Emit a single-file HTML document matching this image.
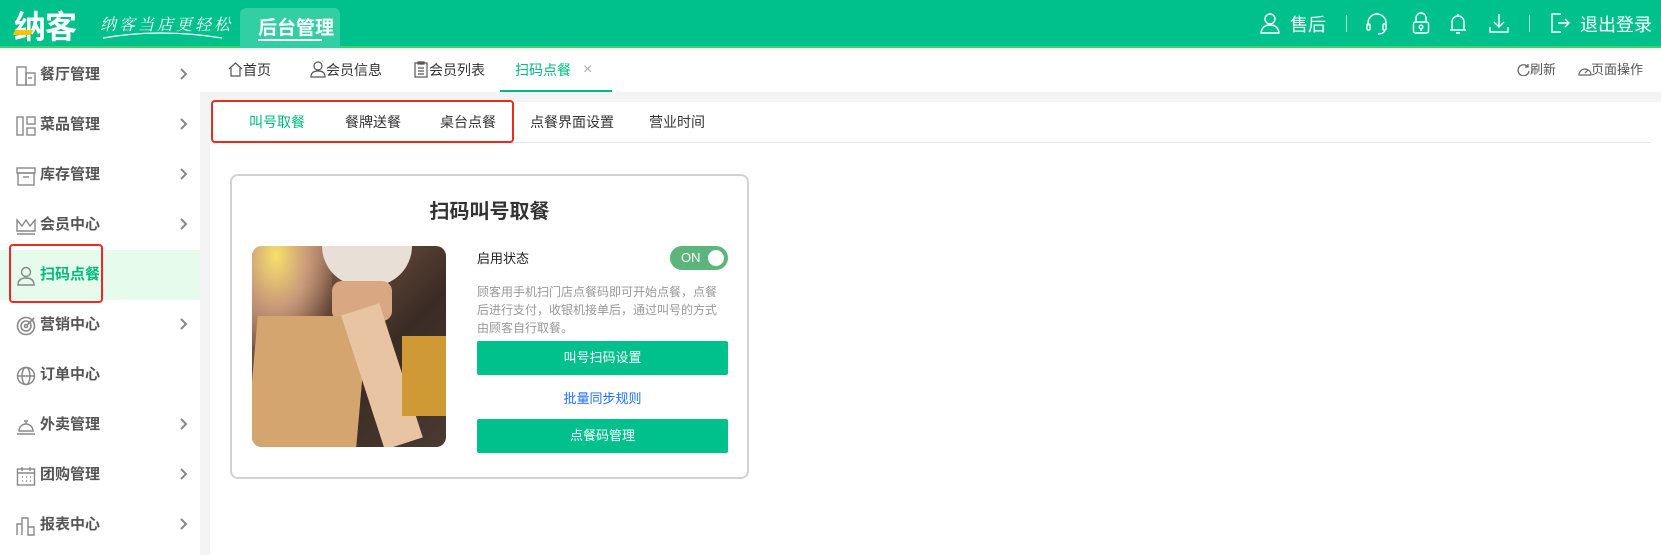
<!DOCTYPE html>
<html><head><meta charset="utf-8"><style>
*{margin:0;padding:0;box-sizing:border-box}
body{width:1661px;height:555px;overflow:hidden;background:#f4f4f4;font-family:"Liberation Sans","Noto Sans CJK SC",sans-serif;position:relative}
.a{position:absolute}
.hdr{left:0;top:0;width:1661px;height:48px;background:#00c08b;border-bottom:2px solid #3fd06e}
.w{color:#fff}
.side{left:0;top:50px;width:200px;height:505px;background:#fff}
.row{position:absolute;left:0;width:200px;height:50px;font-size:15px;font-weight:bold;color:#555;line-height:50px}
.row .t{position:absolute;left:40px}
.row .c{position:absolute;left:180px;top:18px}
.row svg{position:absolute;left:16px;top:16px}
.tabbar{left:200px;top:50px;width:1461px;height:42px;background:#fff}
.tb{position:absolute;top:0;line-height:40px;font-size:14px;color:#333}
.panel{left:210px;top:102px;width:1451px;height:453px;background:#fff}
.st{position:absolute;top:108px;font-size:14px;color:#333;line-height:28px}
</style></head><body>
<div class="a hdr"></div>
<div class="a w" style="left:14px;top:2px;font-size:32px;font-weight:bold;letter-spacing:-1px">纳客</div>
<div class="a" style="left:14px;top:30px;width:18px;height:5px;background:#f5c400;transform:skewX(-30deg)"></div>
<div class="a w" style="left:100px;top:12px;font-size:16px;font-style:italic;font-family:'Noto Serif CJK SC',serif;letter-spacing:3px">纳客当店更轻松</div>
<svg class="a" style="left:100px;top:30px" width="125" height="10"><path d="M3 8 Q60 -2 122 8" stroke="#fff" fill="none" stroke-width="1.2"/></svg>
<div class="a" style="left:240px;top:8px;width:100px;height:40px;background:#31cfa2;border-radius:6px 6px 0 0"></div>
<div class="a w" style="left:258px;top:13px;font-size:19px;font-weight:bold">后台管理</div>
<div class="a" style="left:258px;top:39px;width:64px;height:2px;background:#fff"></div>
<svg class="a" style="left:1259px;top:12px" width="22" height="22" fill="none" stroke="#fff" stroke-width="1.4"><circle cx="11" cy="7" r="5"/><path d="M2 21 Q3 13 11 13 Q19 13 20 21Z"/></svg>
<div class="a w" style="left:1290px;top:11px;font-size:18px">售后</div>
<div class="a" style="left:1346px;top:15px;width:1px;height:17px;background:#9fe5cc"></div>
<svg class="a" style="left:1366px;top:13px" width="22" height="22" fill="none" stroke="#fff" stroke-width="1.4"><path d="M2 13 V10 A9 9 0 0 1 20 10 V13"/><rect x="1" y="11" width="3" height="6" rx="1"/><rect x="17" y="11" width="3" height="6" rx="1"/><path d="M19 17 Q18 21 12 21"/></svg>
<svg class="a" style="left:1412px;top:12px" width="18" height="22" fill="none" stroke="#fff" stroke-width="1.4"><path d="M4 10 V6 A5 5 0 0 1 14 6 V10"/><rect x="1.5" y="10" width="15" height="11" rx="2"/><circle cx="9" cy="15" r="1.8"/><path d="M9 17 V19"/></svg>
<svg class="a" style="left:1449px;top:12px" width="18" height="22" fill="none" stroke="#fff" stroke-width="1.4"><path d="M3 18 V10 A6 6 0 0 1 15 10 V18 Z M1 18 H17 M9 2 V4 M7 21 H11"/></svg>
<svg class="a" style="left:1488px;top:12px" width="22" height="22" fill="none" stroke="#fff" stroke-width="1.4"><path d="M11 2 V15 M6 10 L11 15 L16 10 M2 15 V20 H20 V15"/></svg>
<div class="a" style="left:1529px;top:15px;width:1px;height:17px;background:#9fe5cc"></div>
<svg class="a" style="left:1549px;top:12px" width="22" height="22" fill="none" stroke="#fff" stroke-width="1.4"><path d="M12 2 H3 V20 H12 M9 11 H20 M16 7 L20 11 L16 15"/></svg>
<div class="a w" style="left:1580px;top:11px;font-size:18px">退出登录</div>

<div class="a side">
 <div class="row" style="top:0"><svg width="20" height="20" fill="none" stroke="#888" stroke-width="1.4"><rect x="1" y="1" width="9" height="18"/><rect x="10" y="7" width="9" height="12"/><path d="M12 12h4"/></svg><span class="t">餐厅管理</span><svg class="c" width="8" height="12" fill="none" stroke="#888" stroke-width="2"><path d="M1 1 L6 6 L1 11"/></svg></div>
 <div class="row" style="top:50px"><svg width="20" height="20" fill="none" stroke="#888" stroke-width="1.4"><rect x="1" y="1" width="6" height="18"/><rect x="11" y="1" width="8" height="7"/><rect x="11" y="12" width="8" height="7"/></svg><span class="t">菜品管理</span><svg class="c" width="8" height="12" fill="none" stroke="#888" stroke-width="2"><path d="M1 1 L6 6 L1 11"/></svg></div>
 <div class="row" style="top:100px"><svg width="20" height="20" fill="none" stroke="#888" stroke-width="1.4"><rect x="1" y="2" width="18" height="5"/><rect x="2" y="7" width="16" height="12"/><path d="M7 11h6"/></svg><span class="t">库存管理</span><svg class="c" width="8" height="12" fill="none" stroke="#888" stroke-width="2"><path d="M1 1 L6 6 L1 11"/></svg></div>
 <div class="row" style="top:150px"><svg width="20" height="20" fill="none" stroke="#888" stroke-width="1.4"><path d="M1 4 L6 10 L10 4 L14 10 L19 4 V15 H1Z M1 18 H19"/></svg><span class="t">会员中心</span><svg class="c" width="8" height="12" fill="none" stroke="#888" stroke-width="2"><path d="M1 1 L6 6 L1 11"/></svg></div>
 <div class="row" style="top:200px;background:#e6fbec;color:#00b97f"><svg width="20" height="20" fill="none" stroke="#888" stroke-width="1.4"><circle cx="10" cy="6" r="4.5"/><path d="M2 19 Q2 12 10 12 Q18 12 18 19Z"/></svg><span class="t">扫码点餐</span></div>
 <div class="row" style="top:250px"><svg width="20" height="20" fill="none" stroke="#888" stroke-width="1.6"><circle cx="10" cy="10" r="8.5"/><circle cx="10" cy="10" r="5"/><circle cx="10" cy="10" r="1.5"/><path d="M11 9 L18 2"/></svg><span class="t">营销中心</span><svg class="c" width="8" height="12" fill="none" stroke="#888" stroke-width="2"><path d="M1 1 L6 6 L1 11"/></svg></div>
 <div class="row" style="top:300px"><svg width="20" height="20" fill="none" stroke="#888" stroke-width="1.5"><circle cx="10" cy="10" r="8.5"/><ellipse cx="10" cy="10" rx="4" ry="8.5"/><path d="M1.5 10h17"/></svg><span class="t">订单中心</span></div>
 <div class="row" style="top:350px"><svg width="20" height="20" fill="none" stroke="#888" stroke-width="1.4"><path d="M3 15 A7 7 0 0 1 17 15 Z M1 18 H19 M8 5 H12 M10 5 V8"/></svg><span class="t">外卖管理</span><svg class="c" width="8" height="12" fill="none" stroke="#888" stroke-width="2"><path d="M1 1 L6 6 L1 11"/></svg></div>
 <div class="row" style="top:400px"><svg width="20" height="20" fill="none" stroke="#888" stroke-width="1.4"><rect x="1.5" y="3" width="17" height="16"/><path d="M1.5 7 H18.5 M6 1v4 M14 1v4"/><path d="M6 11h1M10 11h1M14 11h1M6 15h1M10 15h1M14 15h1"/></svg><span class="t">团购管理</span><svg class="c" width="8" height="12" fill="none" stroke="#888" stroke-width="2"><path d="M1 1 L6 6 L1 11"/></svg></div>
 <div class="row" style="top:450px"><svg width="20" height="20" fill="none" stroke="#888" stroke-width="1.4"><path d="M1 19 V8 H6 V19 M6 19 V2 H12 V19 M12 19 V11 H18 V19 Z"/></svg><span class="t">报表中心</span><svg class="c" width="8" height="12" fill="none" stroke="#888" stroke-width="2"><path d="M1 1 L6 6 L1 11"/></svg></div>
</div>
<div class="a" style="left:9px;top:244px;width:94px;height:59px;border:2px solid #f0281e;border-radius:4px"></div>

<div class="a tabbar">
 <svg class="a" style="left:28px;top:12px" width="15" height="15" fill="none" stroke="#555" stroke-width="1.2"><path d="M1 7 L7.5 1 L14 7 M3 6 V14 H12 V6"/></svg>
 <span class="tb" style="left:43px">首页</span>
 <svg class="a" style="left:110px;top:11px" width="16" height="17" fill="none" stroke="#555" stroke-width="1.2"><circle cx="8" cy="5" r="4"/><path d="M1 16 Q1 10 8 10 Q15 10 15 16Z"/></svg>
 <span class="tb" style="left:126px">会员信息</span>
 <svg class="a" style="left:214px;top:11px" width="14" height="17" fill="none" stroke="#555" stroke-width="1.2"><rect x="1" y="2" width="12" height="14"/><path d="M4 1h6v2H4z M4 7h6M4 10h6M4 13h6"/></svg>
 <span class="tb" style="left:229px">会员列表</span>
 <span class="tb" style="left:315px;color:#00b97f">扫码点餐</span>
 <span class="tb" style="left:383px;color:#aaa;font-size:16px">×</span>
 <div class="a" style="left:300px;top:40px;width:112px;height:2px;background:#00b98a"></div>
 <svg class="a" style="left:1317px;top:13px" width="13" height="13" fill="none" stroke="#666" stroke-width="1.3"><path d="M11 4 A5.5 5.5 0 1 0 12 8 M11 1 V4 H8"/></svg>
 <span class="tb" style="left:1330px;color:#555;font-size:13px">刷新</span>
 <svg class="a" style="left:1378px;top:14px" width="14" height="12" fill="none" stroke="#666" stroke-width="1.2"><path d="M1 11 A6 6 0 1 1 13 11 Z M7 9 L10 6"/></svg>
 <span class="tb" style="left:1391px;color:#555;font-size:13px">页面操作</span>
</div>

<div class="a panel"></div>
<span class="st" style="left:249px;color:#00b97f">叫号取餐</span>
<span class="st" style="left:345px">餐牌送餐</span>
<span class="st" style="left:440px">桌台点餐</span>
<span class="st" style="left:530px">点餐界面设置</span>
<span class="st" style="left:649px">营业时间</span>
<div class="a" style="left:228px;top:142px;width:1422px;height:1px;background:#e4e4e4"></div>
<div class="a" style="left:228px;top:142px;width:75px;height:1px;background:#00b97f"></div>
<div class="a" style="left:211px;top:100px;width:303px;height:43px;border:2px solid #f0281e;border-radius:4px"></div>

<div class="a" style="left:230px;top:174px;width:519px;height:305px;border:2px solid #d2d2d2;border-radius:8px;background:#fff"></div>
<div class="a" style="left:230px;top:195px;width:519px;text-align:center;font-size:20px;font-weight:bold;color:#333">扫码叫号取餐</div>
<div class="a" style="left:252px;top:246px;width:194px;height:201px;border-radius:10px;overflow:hidden;background:linear-gradient(135deg,#b98a70 0%,#6b4a3a 30%,#3a2c25 60%,#4a3a30 100%)">
 <div class="a" style="left:0;top:0;width:80px;height:100px;background:radial-gradient(ellipse at 30% 10%,#f6e06a 0,#c99a7a 40%,transparent 80%)"></div>
 <div class="a" style="left:70px;top:0;width:90px;height:40px;border-radius:0 0 40px 40px;background:#e8e0d6"></div>
 <div class="a" style="left:80px;top:35px;width:60px;height:40px;background:#d9a883;border-radius:10px"></div>
 <div class="a" style="left:0px;top:70px;width:110px;height:131px;background:#d4a56e;transform:skewX(-5deg)"></div>
 <div class="a" style="left:110px;top:60px;width:40px;height:141px;background:#e9c4a2;transform:rotate(-18deg)"></div>
 <div class="a" style="left:150px;top:90px;width:44px;height:80px;background:#cf9a35"></div>
</div>
<div class="a" style="left:477px;top:248px;font-size:13px;color:#222">启用状态</div>
<div class="a" style="left:670px;top:246px;width:58px;height:24px;border-radius:12px;background:#5cb57a"></div>
<div class="a w" style="left:681px;top:250px;font-size:13px">ON</div>
<div class="a" style="left:708px;top:250px;width:16px;height:16px;border-radius:50%;background:#fff"></div>
<div class="a" style="left:477px;top:283px;width:246px;font-size:12px;line-height:18px;color:#999">顾客用手机扫门店点餐码即可开始点餐，点餐后进行支付，收银机接单后，通过叫号的方式由顾客自行取餐。</div>
<div class="a w" style="left:477px;top:341px;width:251px;height:34px;background:#00c08b;border-radius:2px;text-align:center;line-height:34px;font-size:13px">叫号扫码设置</div>
<div class="a" style="left:477px;top:388px;width:251px;text-align:center;font-size:13px;color:#1e6fff">批量同步规则</div>
<div class="a w" style="left:477px;top:419px;width:251px;height:34px;background:#00c08b;border-radius:2px;text-align:center;line-height:34px;font-size:13px">点餐码管理</div>
</body></html>
